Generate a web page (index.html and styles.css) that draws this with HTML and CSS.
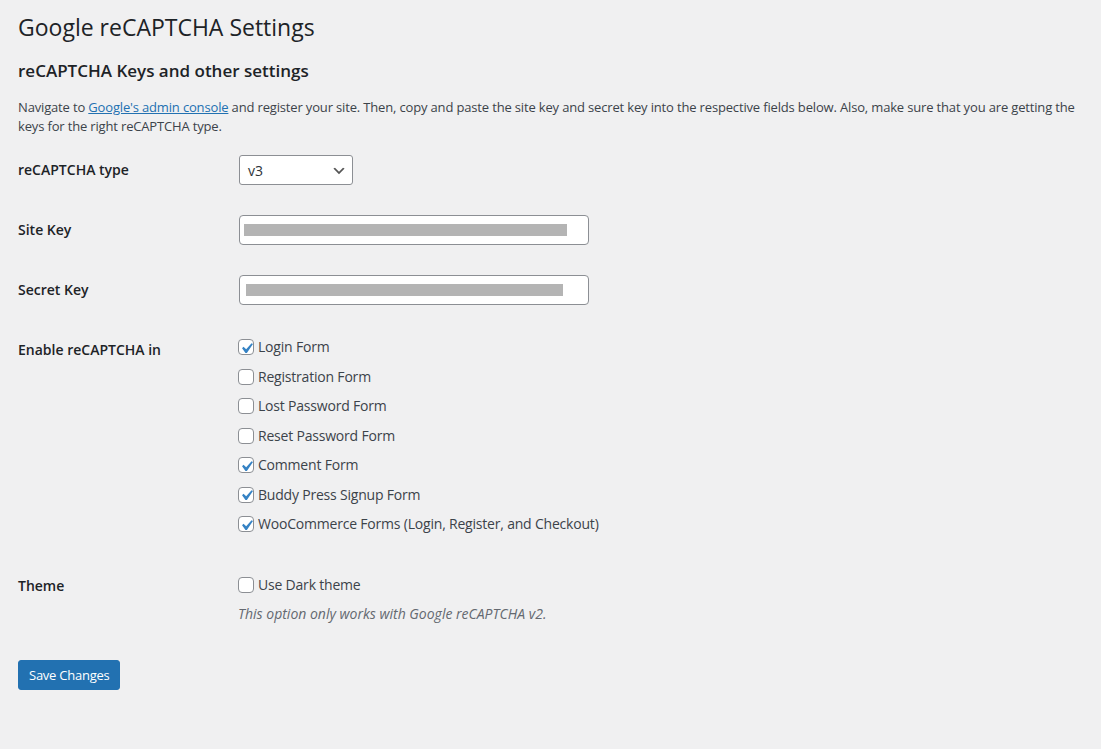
FILE: index.html
```html
<!DOCTYPE html>
<html lang="en">
<head>
<meta charset="utf-8">
<title>Google reCAPTCHA Settings</title>
<link rel="stylesheet" href="styles.css">
</head>
<body>
<div class="wrap">
  <h1 class="page-title">Google reCAPTCHA Settings</h1>
  <h2 class="section-title">reCAPTCHA Keys and other settings</h2>
  <p class="intro">Navigate to <a class="link" href="#">Google's admin console</a> and register your site. Then, copy and paste the site key and secret key into the respective fields below. Also, make sure that you are getting the<br>keys for the right reCAPTCHA type.</p>

  <table class="form-table">
    <tr>
      <th class="row-label">reCAPTCHA type</th>
      <td class="row-field">
        <div class="select">
          <span class="select-value">v3</span>
          <svg class="select-arrow" viewBox="0 0 20 20" width="16" height="16"><path d="M5 6l5 5 5-5 2 1-7 7-7-7 2-1z" fill="#555"/></svg>
        </div>
      </td>
    </tr>
    <tr>
      <th class="row-label">Site Key</th>
      <td class="row-field">
        <div class="text-input"><span class="redact redact-site"></span></div>
      </td>
    </tr>
    <tr>
      <th class="row-label">Secret Key</th>
      <td class="row-field">
        <div class="text-input"><span class="redact redact-secret"></span></div>
      </td>
    </tr>
    <tr>
      <th class="row-label">Enable reCAPTCHA in</th>
      <td class="row-field checks-cell">
        <div class="checklist">
          <label class="check-label"><span class="cb"><svg viewBox="0 0 20 20"><path d="M14.83 4.89l1.34.94-5.81 8.38H9.02L5.78 9.67l1.34-1.25 2.57 2.4z" fill="#3582c4"/></svg></span>Login Form</label>
          <label class="check-label"><span class="cb"></span>Registration Form</label>
          <label class="check-label"><span class="cb"></span>Lost Password Form</label>
          <label class="check-label"><span class="cb"></span>Reset Password Form</label>
          <label class="check-label"><span class="cb"><svg viewBox="0 0 20 20"><path d="M14.83 4.89l1.34.94-5.81 8.38H9.02L5.78 9.67l1.34-1.25 2.57 2.4z" fill="#3582c4"/></svg></span>Comment Form</label>
          <label class="check-label"><span class="cb"><svg viewBox="0 0 20 20"><path d="M14.83 4.89l1.34.94-5.81 8.38H9.02L5.78 9.67l1.34-1.25 2.57 2.4z" fill="#3582c4"/></svg></span>Buddy Press Signup Form</label>
          <label class="check-label"><span class="cb"><svg viewBox="0 0 20 20"><path d="M14.83 4.89l1.34.94-5.81 8.38H9.02L5.78 9.67l1.34-1.25 2.57 2.4z" fill="#3582c4"/></svg></span>WooCommerce Forms (Login, Register, and Checkout)</label>
        </div>
      </td>
    </tr>
    <tr>
      <th class="row-label">Theme</th>
      <td class="row-field theme-cell">
        <label class="check-label"><span class="cb"></span>Use Dark theme</label>
        <p class="description">This option only works with Google reCAPTCHA v2.</p>
      </td>
    </tr>
  </table>

  <button class="button-primary" type="button">Save Changes</button>
</div>
</body>
</html>
```

FILE: styles.css
```css
html, body {
  margin: 0;
  background: #f0f0f1;
}

body {
  color: #3c434a;
  font-family: "Open Sans", "Noto Sans", "Liberation Sans", sans-serif;
  font-size: 13px;
}

.wrap {
  padding: 12px 18px 0;
}

.page-title {
  margin: 0;
  font-size: 23px;
  font-weight: 400;
  line-height: 30px;
  color: #1d2327;
}

.section-title {
  margin: 17px 0 13px;
  font-size: 17px;
  font-weight: 600;
  line-height: 24px;
  color: #1d2327;
}

.intro {
  margin: 0 0 4.5px;
  padding-top: 1.5px;
  line-height: 19.5px;
  letter-spacing: -0.16px;
  white-space: nowrap;
}

.link {
  color: #2271b1;
  text-decoration: underline;
}

.form-table {
  border-collapse: collapse;
  border-spacing: 0;
}

.row-label {
  width: 200px;
  padding: 20px 10px 0 0;
  text-align: left;
  vertical-align: top;
  font-size: 14px;
  line-height: 18px;
  font-weight: 600;
  color: #1d2327;
}

.row-field {
  padding: 14px 10px 16px;
  vertical-align: top;
  font-size: 14px;
}

.select {
  box-sizing: border-box;
  width: 114px;
  height: 30px;
  margin-left: 1px;
  padding: 0 5px 0 8px;
  display: flex;
  align-items: center;
  justify-content: space-between;
  background: #fff;
  border: 1px solid #8c8f94;
  border-radius: 3px;
  color: #2c3338;
  font-size: 14px;
}

.select-arrow {
  display: block;
  margin-top: 1px;
}

.text-input {
  box-sizing: border-box;
  width: 350px;
  height: 30px;
  margin-left: 1px;
  padding: 8px 0 0 4px;
  background: #fff;
  border: 1px solid #8c8f94;
  border-radius: 4px;
}

.redact {
  display: block;
  height: 12px;
  background: #b4b4b4;
}

.redact-site {
  width: 323px;
}

.redact-secret {
  width: 317px;
  margin-left: 2px;
}

.checks-cell {
  padding: 16px 10px 23px;
}

.checklist {
  display: flex;
  flex-direction: column;
  gap: 9.5px;
}

.check-label {
  display: flex;
  align-items: center;
  height: 20px;
  line-height: 20px;
  color: #3c434a;
  font-size: 14px;
  letter-spacing: -0.2px;
  white-space: nowrap;
}

.cb {
  position: relative;
  flex: none;
  box-sizing: border-box;
  width: 16px;
  height: 16px;
  margin-right: 4px;
  background: #fff;
  border: 1px solid #8c8f94;
  border-radius: 4px;
}

.cb svg {
  position: absolute;
  left: -3.5px;
  top: -2.5px;
  width: 21px;
  height: 21px;
}

.theme-cell {
  padding: 17.5px 10px 14px;
}

.description {
  margin: 9px 0 0;
  font-size: 14px;
  font-style: italic;
  line-height: 19.5px;
  color: #646970;
}

.button-primary {
  display: inline-block;
  box-sizing: border-box;
  height: 30px;
  margin-top: 22.5px;
  padding: 0 10px;
  background: #2271b1;
  border: 1px solid #2271b1;
  border-radius: 3px;
  color: #fff;
  font-family: inherit;
  font-size: 13px;
  letter-spacing: -0.25px;
  line-height: 28px;
  cursor: pointer;
}
```
